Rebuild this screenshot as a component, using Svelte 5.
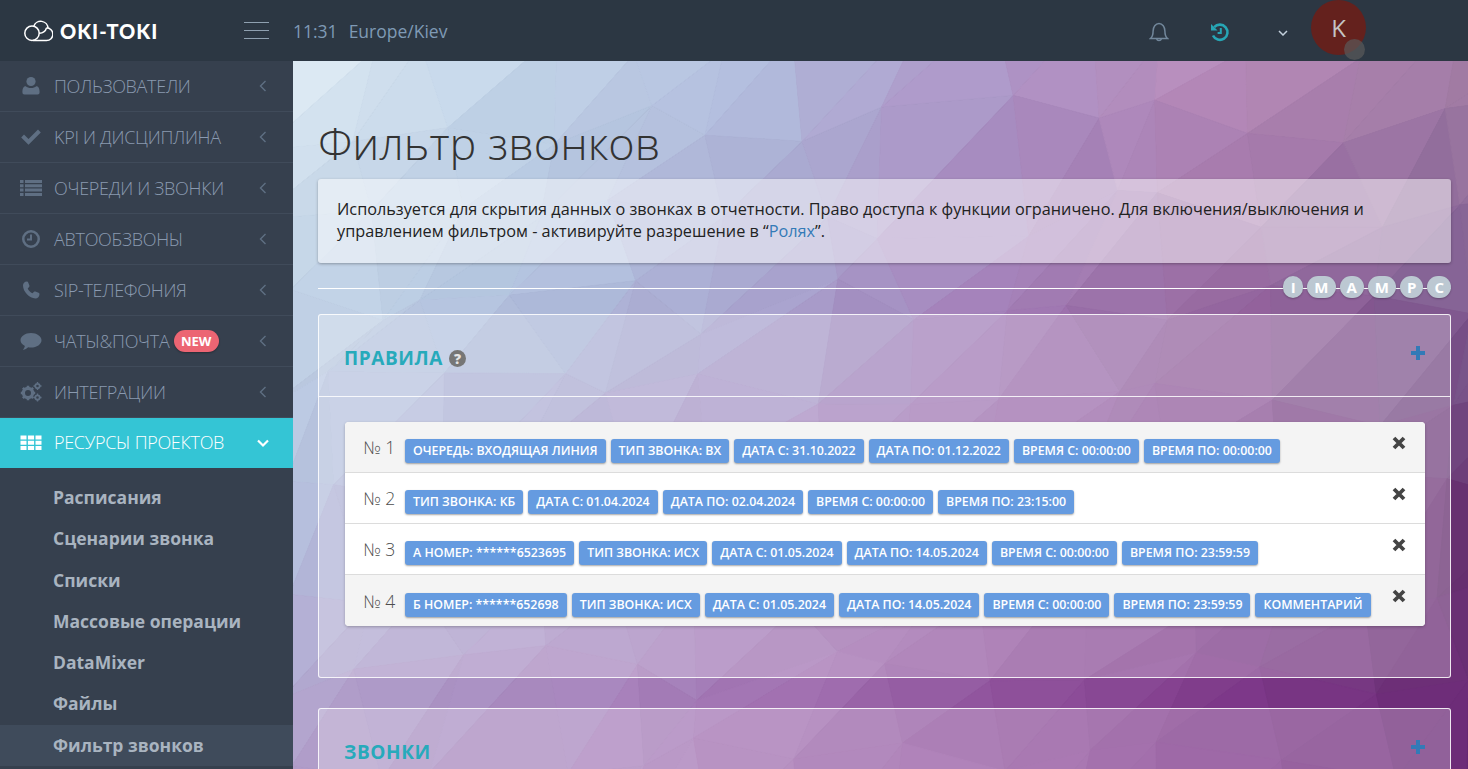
<script>
	// control colours for the low-poly backdrop, rows top to bottom
	const grid = [
		['#dbe8f2', '#c2d4e8', '#b0bcdc', '#ad94c6', '#b98cba', '#a27ca4'],
		['#c2d4e6', '#b0c2de', '#a8a4ce', '#a37fb8', '#96689f', '#7d5d90'],
		['#b4bedc', '#ab9fcc', '#a683bc', '#9a64a6', '#84498f', '#66306f'],
		['#b09cc8', '#a884bc', '#a06cae', '#8f4f9b', '#7d3589', '#6a2875']
	];
	const W = 1175;
	const H = 708;

	function hex(c) {
		return [1, 3, 5].map((i) => parseInt(c.slice(i, i + 2), 16));
	}

	function colorAt(x, y, shade) {
		const gx = Math.min(x / W, 0.999) * 5;
		const gy = Math.min(y / H, 0.999) * 3;
		const cx = Math.floor(gx);
		const cy = Math.floor(gy);
		const fx = gx - cx;
		const fy = gy - cy;
		const a = hex(grid[cy][cx]);
		const b = hex(grid[cy][cx + 1]);
		const c = hex(grid[cy + 1][cx]);
		const d = hex(grid[cy + 1][cx + 1]);
		const rgb = a.map((v, i) => {
			const top = v + (b[i] - v) * fx;
			const bottom = c[i] + (d[i] - c[i]) * fx;
			return Math.round(top + (bottom - top) * fy + shade);
		});
		return `rgb(${rgb.join(',')})`;
	}

	let seed = 17;
	function rnd() {
		seed = (seed * 16807) % 2147483647;
		return seed / 2147483647;
	}

	const step = 92;
	const points = [];
	for (let r = 0; r <= 9; r++) {
		const row = [];
		for (let c = 0; c <= 14; c++) {
			row.push([c * step - 30 + rnd() * 60 - 30, r * step - 30 + rnd() * 60 - 30]);
		}
		points.push(row);
	}

	const shards = [];
	function shard(p, q, s) {
		const mx = (p[0] + q[0] + s[0]) / 3;
		const my = (p[1] + q[1] + s[1]) / 3;
		shards.push({
			points: [p, q, s].map((v) => v.join(',')).join(' '),
			fill: colorAt(Math.max(0, mx), Math.max(0, my), rnd() * 5 - 2.5)
		});
	}
	for (let r = 0; r < 9; r++) {
		for (let c = 0; c < 14; c++) {
			shard(points[r][c], points[r][c + 1], points[r + 1][c]);
			shard(points[r][c + 1], points[r + 1][c + 1], points[r + 1][c]);
		}
	}

	const menu = [
		{ label: 'Пользователи', icon: 'user' },
		{ label: 'KPI и дисциплина', icon: 'check' },
		{ label: 'Очереди и звонки', icon: 'list' },
		{ label: 'Автообзвоны', icon: 'clock' },
		{ label: 'SIP-телефония', icon: 'phone' },
		{ label: 'Чаты&почта', icon: 'chat', badge: 'NEW' },
		{ label: 'Интеграции', icon: 'cogs' },
		{ label: 'Ресурсы проектов', icon: 'grid', open: true }
	];

	const submenu = ['Расписания', 'Сценарии звонка', 'Списки', 'Массовые операции', 'DataMixer', 'Файлы', 'Фильтр звонков'];

	const pills = ['I', 'M', 'A', 'M', 'P', 'C'];

	const rules = [
		['Очередь: Входящая линия', 'Тип звонка: вх', 'Дата с: 31.10.2022', 'Дата по: 01.12.2022', 'Время с: 00:00:00', 'Время по: 00:00:00'],
		['Тип звонка: кб', 'Дата с: 01.04.2024', 'Дата по: 02.04.2024', 'Время с: 00:00:00', 'Время по: 23:15:00'],
		['А номер: ******6523695', 'Тип звонка: исх', 'Дата с: 01.05.2024', 'Дата по: 14.05.2024', 'Время с: 00:00:00', 'Время по: 23:59:59'],
		['Б номер: ******652698', 'Тип звонка: исх', 'Дата с: 01.05.2024', 'Дата по: 14.05.2024', 'Время с: 00:00:00', 'Время по: 23:59:59', 'Комментарий']
	];
</script>

<div class="page">
	<header class="topbar">
		<div class="brand">
			<svg class="cloud" viewBox="0 0 29 22" width="29" height="22" fill="none" stroke="#fff" stroke-width="1.5">
				<circle cx="8" cy="13.200" r="7.200" />
				<path d="M9.800 6.200A7.300 7.300 0 0 1 24 8.500" />
				<path d="M22.500 7.800a6.400 6.400 0 0 1 0 12.800H9" />
				<path d="M15 13.200a7 7 0 0 0 7.500-5.400" />
			</svg>
			<span class="brand-name">OKI-TOKI</span>
		</div>
		<button class="burger" aria-label="Меню"><i></i><i></i><i></i></button>
		<div class="clock"><span>11:31</span><span>Europe/Kiev</span></div>
		<div class="top-right">
			<svg class="bell" viewBox="0 0 20 22" width="20" height="22" fill="none" stroke="#72879b" stroke-width="1.500">
				<path d="M1.500 17.500c1.800-1.600 2.600-3.600 2.600-7.500 0-4 2.400-7.600 5.900-7.600s5.900 3.600 5.900 7.600c0 3.900.8 5.900 2.600 7.500z" />
				<path d="M7.600 17.700a2.500 2.500 0 0 0 4.800 0" />
			</svg>
			<svg class="history" viewBox="0 0 20 20" width="20" height="20" fill="none" stroke="#27a6b5" stroke-width="2.600">
				<path d="M4.200 5.200A7.600 7.600 0 1 1 3 13.500" />
				<path d="M1 2v6.600h6.600z" fill="#27a6b5" stroke="none" />
				<path d="M10.800 6v5H7.600" stroke-width="2" />
			</svg>
			<svg class="caret" viewBox="0 0 10 6" width="10" height="6" fill="none" stroke="#c3d0dc" stroke-width="1.500">
				<path d="M1 1l4 4 4-4" />
			</svg>
			<div class="avatar">K<span class="status"></span></div>
		</div>
	</header>

	<div class="body">
		<nav class="sidebar">
			{#each menu as item}
				<div class="item" class:open={item.open}>
					<svg class="item-icon" viewBox="0 0 22 20" width="22" height="20" fill="currentColor">
						{#if item.icon === 'user'}
							<circle cx="11" cy="5.500" r="4.600" />
							<path d="M4.800 18.500a2.200 2.200 0 0 1-2.400-2.300c0-3.400.9-5.900 3.300-5.900 1.300 1.100 3.100 1.800 5.300 1.800s4-.7 5.300-1.800c2.400 0 3.300 2.500 3.300 5.900a2.200 2.200 0 0 1-2.400 2.300z" />
						{:else if item.icon === 'check'}
							<path d="M1.200 10.400l2.800-2.800 4.500 4.500 9.500-9.500 2.800 2.800L8.500 17.700z" />
						{:else if item.icon === 'list'}
							<path d="M0 2h3.500v3H0zM5 2h17v3H5zM0 6.300h3.500v3H0zM5 6.300h17v3H5zM0 10.600h3.500v3H0zM5 10.600h17v3H5zM0 14.900h3.500v3H0zM5 14.900h17v3H5z" />
						{:else if item.icon === 'clock'}
							<path fill-rule="evenodd" d="M11 1a9 9 0 1 1 0 18 9 9 0 0 1 0-18zm0 2.500a6.500 6.500 0 1 0 0 13 6.500 6.500 0 0 0 0-13z" />
							<path d="M10 5.500h2V11.500H7v-2h3z" />
						{:else if item.icon === 'phone'}
							<path d="M7 1.500c.6 0 1 .4 1.200.9l1.200 3.200c.2.500 0 1-.3 1.400L7.700 8.400c.8 2 2.700 3.900 4.800 4.800l1.500-1.400c.4-.3.900-.5 1.400-.3l3.200 1.200c.5.200.9.700.9 1.200 0 2.600-1.700 4.600-4.200 4.600C9.600 18.500 3 11.900 3 5.600 3 3.200 4.500 1.500 7 1.500z" />
						{:else if item.icon === 'chat'}
							<path d="M11 2c5.800 0 10.500 3.300 10.500 7.300S16.800 16.600 11 16.600c-1 0-1.900-.1-2.800-.3-1.300 1.200-3 2.300-5.300 2.700 1-1.200 1.700-2.500 2-4C2.300 13.700.5 11.700.5 9.300.5 5.300 5.200 2 11 2z" />
						{:else if item.icon === 'cogs'}
							<circle cx="8" cy="11" r="4.600" fill="none" stroke="currentColor" stroke-width="3.200" />
							<path d="M6.700 3.800h2.600v3H6.700zM6.700 15.200h2.600v3H6.700zM.8 9.700h3v2.600h-3zM12.200 9.700h3v2.600h-3zM2 6.800l1.800-1.800 2 2-1.800 1.800zM10.200 15l1.800-1.800 2 2-1.800 1.800zM14 6.800L12.200 5l-2 2 1.800 1.800zM5.800 15L4 13.200l-2 2 1.800 1.800z" />
							<circle cx="17.500" cy="4" r="2.200" fill="none" stroke="currentColor" stroke-width="1.800" />
							<circle cx="17.500" cy="15.500" r="2.200" fill="none" stroke="currentColor" stroke-width="1.800" />
							<path d="M16.800 0h1.400v1.500h-1.400zM16.800 6.500h1.400V8h-1.400zM21.500 3.300V4.700H20V3.300zM15 3.300v1.400h-1.500V3.300zM16.800 11.500h1.400V13h-1.400zM16.800 18h1.400v1.500h-1.400zM21.500 14.800v1.400H20v-1.400zM15 14.800v1.400h-1.500v-1.400z" />
						{:else}
							<path d="M.5 2.500h6v4h-6zM7.900 2.500h6.200v4H7.900zM15.500 2.500h6v4h-6zM.5 7.800h6v4h-6zM7.900 7.800h6.200v4H7.900zM15.500 7.800h6v4h-6zM.5 13.100h6v4h-6zM7.900 13.100h6.200v4H7.900zM15.500 13.100h6v4h-6z" />
						{/if}
					</svg>
					<span class="item-label">{item.label}</span>
					{#if item.badge}<span class="badge">{item.badge}</span>{/if}
					<svg class="item-arrow" viewBox="0 0 14 14" width="14" height="14" fill="none" stroke="currentColor" stroke-width={item.open ? 2.200 : 1.400}>
						{#if item.open}
							<path d="M2 4.500l5 5 5-5" />
						{:else}
							<path d="M9.500 2l-5 5 5 5" />
						{/if}
					</svg>
				</div>
			{/each}
			<div class="subitems">
				{#each submenu as sub, i}
					<div class="subitem" class:current={i === submenu.length - 1}>{sub}</div>
				{/each}
			</div>
		</nav>

		<main class="content">
			<svg class="backdrop" viewBox="0 0 1175 708" preserveAspectRatio="none" aria-hidden="true">
				{#each shards as s}
					<polygon points={s.points} fill={s.fill} stroke={s.fill} stroke-width="1" />
				{/each}
			</svg>

			<div class="inner">
				<h1>Фильтр звонков</h1>
				<div class="note">
					Используется для скрытия данных о звонках в отчетности. Право доступа к функции ограничено. Для включения/выключения и управлением фильтром - активируйте разрешение в “<a href="#roles">Ролях</a>”.
				</div>

				<div class="pill-line">
					{#each pills as p}
						<span class="pill">{p}</span>
					{/each}
				</div>

				<section class="panel">
					<div class="panel-head">
						<h2>Правила</h2>
						<span class="help">?</span>
						<span class="plus"></span>
					</div>
					<div class="panel-body">
						<div class="rules">
							{#each rules as tags, i}
								<div class="rule" class:odd={i === 0 || i === 3}>
									<span class="num">№ {i + 1}</span>
									<div class="tags">
										{#each tags as tag}
											<span class="tag">{tag}</span>
										{/each}
									</div>
									<svg class="close" viewBox="0 0 14 14" width="14" height="14" stroke="#444" stroke-width="3.800">
										<path d="M2 2l10 10M12 2L2 12" />
									</svg>
								</div>
							{/each}
						</div>
					</div>
				</section>

				<section class="panel">
					<div class="panel-head">
						<h2>Звонки</h2>
						<span class="plus"></span>
					</div>
				</section>
			</div>
		</main>
	</div>
</div>

<style>
	:global(body) {
		margin: 0;
		font-family: 'Open Sans', 'Liberation Sans', sans-serif;
	}

	.page {
		display: flex;
		flex-direction: column;
		height: 769px;
		overflow: hidden;
		background: #36404e;
	}

	.topbar {
		display: flex;
		align-items: center;
		flex: none;
		height: 61px;
		background: #2c3743;
		color: #7f9ab5;
	}

	.brand {
		display: flex;
		align-items: center;
		width: 243px;
		padding-left: 24px;
		box-sizing: border-box;
	}

	.brand-name {
		margin-left: 7px;
		color: #fff;
		font-family: 'Lato', sans-serif;
		font-weight: 900;
		font-size: 20px;
		letter-spacing: 1px;
	}

	.burger {
		display: flex;
		flex-direction: column;
		gap: 7px;
		width: 25px;
		padding: 0;
		margin: 0 0 0 1px;
		border: 0;
		background: none;
	}

	.burger i {
		display: block;
		height: 1px;
		background: #8fa0b0;
	}

	.clock {
		display: flex;
		gap: 11px;
		margin-left: 24px;
		font-size: 17.500px;
	}

	.top-right {
		display: flex;
		align-items: center;
		margin-left: auto;
		padding-right: 102px;
	}

	.bell {
		margin-top: 3px;
	}

	.history {
		margin: 3px 0 0 41px;
	}

	.caret {
		margin: 5px 0 0 48px;
	}

	.avatar {
		position: relative;
		display: flex;
		align-items: center;
		justify-content: center;
		width: 55px;
		height: 55px;
		margin: -6px 0 0 23px;
		border-radius: 50%;
		background: #64211d;
		color: #c4c4c4;
		font-size: 24px;
	}

	.status {
		position: absolute;
		left: 33px;
		top: 39px;
		width: 21px;
		height: 21px;
		border-radius: 50%;
		background: rgba(90, 90, 90, 0.7);
	}

	.body {
		display: flex;
		flex: 1;
		min-height: 0;
	}

	.sidebar {
		flex: none;
		width: 293px;
		background: #36404e;
	}

	.item {
		display: flex;
		align-items: center;
		height: 50px;
		padding: 0 23px 0 20px;
		border-bottom: 1px solid #404b5a;
		color: #8a9ab0;
		font-weight: 300;
		font-size: 18px;
		text-transform: uppercase;
		letter-spacing: -0.300px;
	}

	.item.open {
		border-bottom: 0;
		background: #34c5d5;
		color: #fff;
	}

	.item-icon {
		flex: none;
		margin-right: 12px;
		color: #5f6f83;
	}

	.open .item-icon {
		color: #fff;
	}

	.item-label {
		margin-top: -1px;
	}

	.open .item-label {
		margin-top: -3px;
	}

	.badge {
		margin-left: 4px;
		padding: 0 7.500px;
		height: 22px;
		line-height: 22px;
		border-radius: 11px;
		background: #ec6573;
		color: #fff;
		font-weight: 700;
		font-size: 13px;
		letter-spacing: 0;
		box-shadow: 0 1px 2px rgba(0, 0, 0, 0.3);
	}

	.item-arrow {
		margin-left: auto;
		color: #5f6f83;
	}

	.open .item-arrow {
		color: #fff;
	}

	.subitems {
		padding-top: 9px;
	}

	.subitem {
		height: 41.300px;
		line-height: 41px;
		padding-left: 53px;
		color: #a9b4c0;
		font-weight: 700;
		font-size: 17.500px;
	}

	.subitem.current {
		background: #3f4b5b;
	}

	.content {
		position: relative;
		flex: 1;
		min-width: 0;
		overflow: hidden;
	}

	.backdrop {
		position: absolute;
		inset: 0;
		width: 100%;
		height: 100%;
	}

	.inner {
		position: relative;
		padding: 0 17px 0 25px;
	}

	h1 {
		margin: 0;
		padding: 57px 0 0;
		height: 61px;
		line-height: 50px;
		color: #333;
		font-weight: 300;
		font-size: 45px;
	}

	.note {
		padding: 19px 19px 21px;
		border-radius: 3px;
		background: rgba(255, 255, 255, 0.5);
		box-shadow: 0 1px 3px rgba(0, 0, 0, 0.3);
		color: #222;
		font-size: 16.250px;
		line-height: 22px;
	}

	.note a {
		color: #337ab7;
		text-decoration: none;
	}

	.pill-line {
		display: flex;
		justify-content: flex-end;
		align-items: center;
		gap: 4px;
		height: 22px;
		margin: 13px 0 16px;
		background: linear-gradient(#fff, #fff) 0 12px / 100% 1px no-repeat;
	}

	.pill {
		min-width: 6px;
		padding: 0 7px;
		height: 22px;
		line-height: 22px;
		border-radius: 11px;
		text-align: center;
		background: #bcc8d2;
		color: #fff;
		font-weight: 700;
		font-size: 15px;
		box-shadow: 0 1px 2px rgba(0, 0, 0, 0.25);
	}

	.panel {
		margin-bottom: 30px;
		border: 1px solid rgba(255, 255, 255, 0.85);
		border-radius: 3px;
		background: rgba(255, 255, 255, 0.25);
	}

	.panel-head {
		display: flex;
		align-items: center;
		height: 81px;
		padding: 0 25px 0 25px;
		border-bottom: 1px solid rgba(255, 255, 255, 0.85);
	}

	h2 {
		margin: 5px 0 0;
		color: #27aabb;
		font-weight: 700;
		font-size: 19px;
		text-transform: uppercase;
		letter-spacing: 0.600px;
	}

	.help {
		display: flex;
		align-items: center;
		justify-content: center;
		width: 17px;
		height: 17px;
		margin: 5px 0 0 6px;
		border-radius: 50%;
		background: #767676;
		color: #e4e4e4;
		font-weight: 800;
		font-size: 14px;
	}

	.plus {
		width: 14px;
		height: 14px;
		margin: -5px 0 0 auto;
		background:
			linear-gradient(#337ab7, #337ab7) center / 100% 4px no-repeat,
			linear-gradient(#337ab7, #337ab7) center / 4px 100% no-repeat;
	}

	.panel-body {
		padding: 25px 25px 51px 26px;
	}

	.rules {
		border-radius: 4px;
		overflow: hidden;
		background: #fff;
		box-shadow: 0 1px 3px rgba(0, 0, 0, 0.25);
	}

	.rule {
		position: relative;
		display: flex;
		align-items: center;
		height: 50px;
		padding: 0 19px 0 18px;
		border-bottom: 1px solid #dcdcdc;
		background: #fff;
	}

	.rule:last-child {
		border-bottom: 0;
		height: 51px;
	}

	.rule.odd {
		background: #f4f4f4;
	}

	.num {
		flex: none;
		width: 42px;
		color: #4d4d4d;
		font-weight: 300;
		font-size: 17.500px;
	}

	.tags {
		display: flex;
		gap: 5px;
		margin-top: 8px;
	}

	.tag {
		height: 24px;
		line-height: 24px;
		padding: 0 8px;
		border-radius: 3px;
		background: #659be0;
		color: #fff;
		font-weight: 600;
		font-size: 12.380px;
		white-space: nowrap;
		text-transform: uppercase;
		box-shadow: 0 1px 2px rgba(0, 0, 0, 0.35);
	}

	.close {
		margin: -9px 0 0 auto;
		flex: none;
	}
</style>
